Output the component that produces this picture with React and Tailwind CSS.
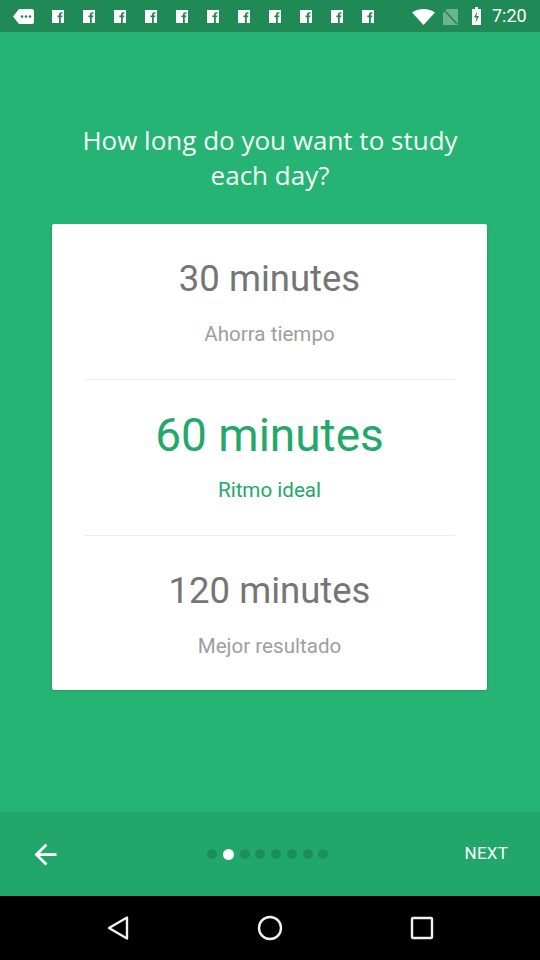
import React from "react";

function FbIcon() {
  return (
    <svg width="12" height="13" viewBox="0 0 12 13">
      <rect x="0" y="0" width="12" height="13" fill="#ffffff" />
      <path d="M7 13V7.2h-1.6V5.6H7V4.4c0-1.5 0.9-2.2 2.2-2.2 0.5 0 1 0 1.2 0.1v1.4h-0.8c-0.6 0-0.8 0.3-0.8 0.8v1.1h1.6l-0.2 1.6H8.8V13z" fill="#1f8a55" />
    </svg>
  );
}

function StatusBar() {
  const fs = Array.from({ length: 11 });
  return (
    <div className="h-[32px] bg-[#1f8a55] flex items-center relative">
      <svg className="absolute left-[13px] top-[9px]" width="21" height="15" viewBox="0 0 21 15">
        <path d="M6 0H19a2 2 0 0 1 2 2V13a2 2 0 0 1-2 2H6L0 7.5z" fill="#ffffff" />
        <circle cx="9" cy="7.5" r="1.3" fill="#1f8a55" />
        <circle cx="13" cy="7.5" r="1.3" fill="#1f8a55" />
        <circle cx="17" cy="7.5" r="1.3" fill="#1f8a55" />
      </svg>
      <div className="absolute left-[52px] top-[10px] flex gap-[19px]">
        {fs.map((_, i) => (
          <FbIcon key={i} />
        ))}
      </div>
      <svg className="absolute left-[412px] top-[9px]" width="23" height="16" viewBox="0 0 23 16">
        <path d="M11.5 16L0 3.5C3 1.2 7 0 11.5 0S20 1.2 23 3.5z" fill="#ffffff" />
      </svg>
      <svg className="absolute left-[443px] top-[9px]" width="15" height="16" viewBox="0 0 15 16">
        <path d="M4 0H15V16H0V4z" fill="#ffffff" fillOpacity="0.35" />
        <path d="M1 1L14 15" stroke="#1f8a55" strokeWidth="1.6" />
      </svg>
      <svg className="absolute left-[472px] top-[7px]" width="9" height="18" viewBox="0 0 9 18">
        <rect x="3" y="0" width="3" height="2" fill="#ffffff" />
        <rect x="0" y="2" width="9" height="16" fill="#ffffff" />
        <path d="M5.5 4L2 10.5h2.6L3.5 16 7 9H4.4z" fill="#1f8a55" />
      </svg>
      <span className="absolute left-[492px] top-[5px] text-[18px] leading-[22px] text-white font-['Roboto',sans-serif]">
        7:20
      </span>
    </div>
  );
}

function Option({ title, sub, selected, last, pt, gap, pb }) {
  return (
    <div>
      <div className={`flex flex-col items-center ${pt} ${pb}`}>
        <div
          className={
            selected
              ? "text-[46px] leading-[54px] text-[#22a86a]"
              : "text-[36.5px] leading-[44px] text-[#757575]"
          }
        >
          {title}
        </div>
        <div
          className={`${gap} text-[20.6px] leading-[28px] ${
            selected ? "text-[#22a86a]" : "text-[#9e9e9e]"
          }`}
        >
          {sub}
        </div>
      </div>
      {!last && <div className="mx-[32px] h-px bg-[#eeeeee]" />}
    </div>
  );
}

function NavBar() {
  return (
    <div className="h-[64px] bg-black flex items-center justify-between px-[106px]">
      <svg width="24" height="26" viewBox="0 0 24 26">
        <path d="M21 2.5V23.5L3 13z" fill="none" stroke="#f2f2f2" strokeWidth="2.4" strokeLinejoin="round" />
      </svg>
      <svg width="26" height="26" viewBox="0 0 26 26">
        <circle cx="13" cy="13" r="11" fill="none" stroke="#f2f2f2" strokeWidth="2.4" />
      </svg>
      <svg width="24" height="24" viewBox="0 0 24 24">
        <rect x="2" y="2" width="20" height="20" rx="1" fill="none" stroke="#f2f2f2" strokeWidth="2.4" />
      </svg>
    </div>
  );
}

export default function App() {
  const dots = [0, 1, 2, 3, 4, 5, 6, 7];
  return (
    <div className="w-[540px] h-[960px] flex flex-col bg-[#25b473] font-['Roboto',sans-serif] overflow-hidden">
      <StatusBar />
      <div className="flex-1 flex flex-col items-center">
        <h1 className="mt-[91px] w-[400px] text-center text-[26px] leading-[35px] text-[#f4fbf7] font-['Open_Sans',sans-serif]">
          How long do you want to study each day?
        </h1>
        <div className="mt-[31px] w-[435px] ml-[-1px] bg-white rounded-[2px] shadow-[0_1px_3px_rgba(0,0,0,0.15)]">
          <Option title="30 minutes" sub="Ahorra tiempo" pt="pt-[33px]" gap="mt-[19px]" pb="pb-[31px]" />
          <Option title="60 minutes" sub="Ritmo ideal" selected pt="pt-[28px]" gap="mt-[14px]" pb="pb-[31px]" />
          <Option title="120 minutes" sub="Mejor resultado" last pt="pt-[33px]" gap="mt-[19px]" pb="pb-[30px]" />
        </div>
      </div>
      <div className="h-[84px] bg-[#22a76a] flex items-center pl-[29px] pr-[32px]">
        <svg width="33" height="33" viewBox="0 0 24 24">
          <path d="M20 11H7.83l5.59-5.59L12 4l-8 8 8 8 1.41-1.41L7.83 13H20v-2z" fill="#ffffff" />
        </svg>
        <div className="flex-1 flex items-center justify-center gap-[5.7px] ml-[9px]">
          {dots.map((d) =>
            d === 1 ? (
              <div key={d} className="w-[11px] h-[11px] rounded-full bg-white" />
            ) : (
              <div key={d} className="w-[10px] h-[10px] rounded-full bg-[#1c8f59]" />
            )
          )}
        </div>
        <span className="text-[17px] text-white tracking-[0.2px]">NEXT</span>
      </div>
      <NavBar />
    </div>
  );
}
